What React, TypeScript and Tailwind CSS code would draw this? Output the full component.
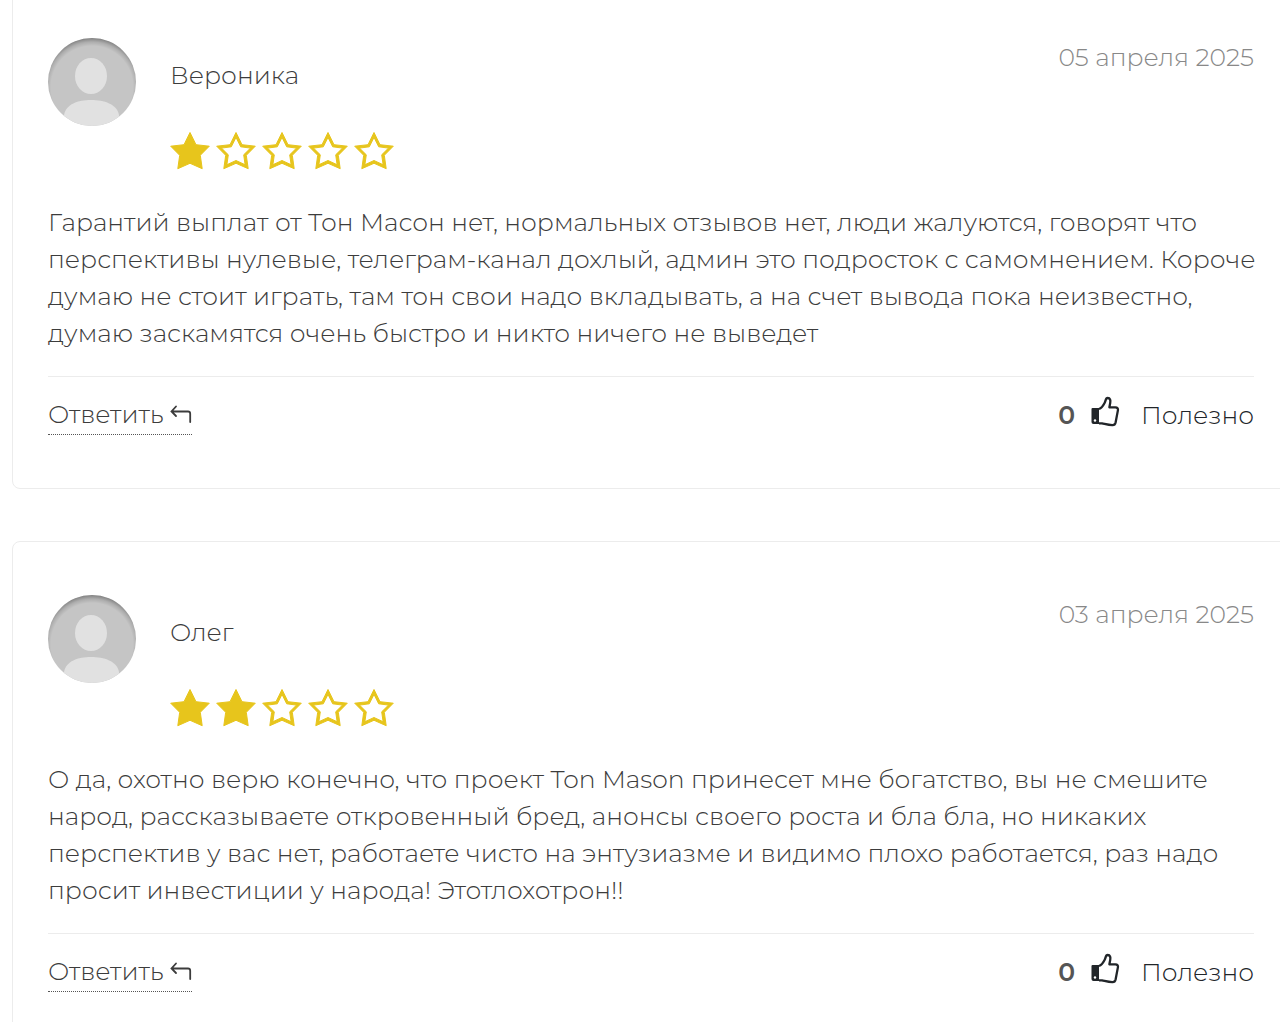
import clsx from "clsx";

interface Review {
  id: number;
  author: string;
  date: string;
  rating: number;
  text: string;
  likes: number;
}

const reviews: Review[] = [
  {
    id: 1,
    author: "Вероника",
    date: "05 апреля 2025",
    rating: 1,
    text: "Гарантий выплат от Тон Масон нет, нормальных отзывов нет, люди жалуются, говорят что перспективы нулевые, телеграм-канал дохлый, админ это подросток с самомнением. Короче думаю не стоит играть, там тон свои надо вкладывать, а на счет вывода пока неизвестно, думаю заскамятся очень быстро и никто ничего не выведет",
    likes: 0,
  },
  {
    id: 2,
    author: "Олег",
    date: "03 апреля 2025",
    rating: 2,
    text: "О да, охотно верю конечно, что проект Ton Mason принесет мне богатство, вы не смешите народ, рассказываете откровенный бред, анонсы своего роста и бла бла, но никаких перспектив у вас нет, работаете чисто на энтузиазме и видимо плохо работается, раз надо просит инвестиции у народа! Этотлохотрон!!",
    likes: 0,
  },
];

const STAR_OUTER = "M20 1.500L26 13.700 39.300 15.200 30.300 24.300 32.200 37.700 20 32.300 7.800 37.700 9.700 24.300.700 15.200 14 13.700z";
const STAR_INNER = "M20 6.400L15.300 15.800 5.500 17.100 12.300 23.800 10.900 33.700 20 29.500 29.100 33.700 27.700 23.800 34.500 17.100 24.700 15.800z";

function Avatar() {
  return (
    <div className="size-[88px] shrink-0 overflow-hidden rounded-full bg-[#c5c5c5]">
      <svg viewBox="0 0 88 88" className="size-full" aria-hidden="true">
        <defs>
          <radialGradient id="avatar-shade" cx="44" cy="49" r="50" gradientUnits="userSpaceOnUse">
            <stop offset="0.82" stopColor="#000" stopOpacity="0" />
            <stop offset="0.9" stopColor="#000" stopOpacity="0.12" />
            <stop offset="1" stopColor="#000" stopOpacity="0.4" />
          </radialGradient>
        </defs>
        <rect width="88" height="88" fill="url(#avatar-shade)" />
        <ellipse cx="43" cy="38" rx="16" ry="18" fill="#e1e1e1" />
        <path d="M16 77C18 66 30 62 43 62s26 4 28 15v11H16z" fill="#e1e1e1" />
      </svg>
    </div>
  );
}

function Star({ filled }: { filled: boolean }) {
  return (
    <svg viewBox="0 0 40 40" className="size-10 text-[#e7c51c]" aria-hidden="true">
      <path
        d={clsx(STAR_OUTER, !filled && STAR_INNER)}
        fill="currentColor"
        fillRule="evenodd"
        stroke="currentColor"
        strokeWidth="1"
        strokeLinejoin="round"
      />
    </svg>
  );
}

function ReplyIcon() {
  return (
    <svg viewBox="0 0 22 18" className="h-[18px] w-[22px]" fill="none" stroke="currentColor" aria-hidden="true">
      <path d="M6 1.500L1.500 6.500 6 11M1.500 6.500H18q2.200 0 2.200 2.200V17" strokeWidth="1.8" strokeLinecap="round" />
    </svg>
  );
}

function ThumbIcon() {
  return (
    <svg viewBox="0 0 30 32" className="mb-[6px] h-8 w-[30px]" aria-hidden="true">
      <path
        d="M8 13C11 12 12.500 9 13.800 6.500 14.800 4.500 14.500 2 16.700 2c2.500 0 3 2.300 2.500 5l-.8 4.300 6 .1c2 0 2.900 1.300 2.500 3l-2.300 12.100c-.4 1.800-1.400 2.700-3.300 2.600-4-.1-7.300-1.200-10.300-1.800H8"
        fill="none"
        stroke="currentColor"
        strokeWidth="2.3"
        strokeLinejoin="round"
      />
      <path d="M1.500 12H8v16H2.500Q.500 28 .500 26V13q0-1 1-1z" fill="currentColor" />
      <circle cx="4" cy="24.500" r="1.200" fill="#fff" />
    </svg>
  );
}

function ReviewCard({ review }: { review: Review }) {
  return (
    <article className="rounded-lg border border-[#ececec] px-[35px] pt-[53px] pb-[53px]">
      <header className="flex items-start">
        <Avatar />
        <div className="ml-[34px]">
          <h3 className="pt-[19px] leading-9">{review.author}</h3>
          <div
            className="mt-[38px] flex gap-[6px]"
            role="img"
            aria-label={`${review.rating} / 5`}
          >
            {[1, 2, 3, 4, 5].map((value) => (
              <Star key={value} filled={value <= review.rating} />
            ))}
          </div>
        </div>
        <time className="ml-auto pt-px leading-9 text-[#888]">{review.date}</time>
      </header>

      <p className="-mr-2 mt-[33px] leading-[37px]">{review.text}</p>

      <footer className="mt-6 flex items-start justify-between border-t border-[#ececec] pt-[19px]">
        <button
          type="button"
          className="flex items-center gap-[6px] border-b border-dotted border-[#555] pb-[2px] leading-9"
        >
          Ответить
          <ReplyIcon />
        </button>
        <div className="flex items-center leading-[38px]">
          <span className="font-semibold text-[#555]">{review.likes}</span>
          <button type="button" className="ml-4 flex items-center gap-5 text-[#212529]">
            <ThumbIcon />
            Полезно
          </button>
        </div>
      </footer>
    </article>
  );
}

export default function App() {
  return (
    <div className="h-screen overflow-hidden bg-white">
      <main className="-mt-4 -mr-[10px] flex flex-col gap-[52px] pl-3 font-['Montserrat','Inter',sans-serif] text-[25px] font-light text-[#3c3c3c]">
        {reviews.map((review) => (
          <ReviewCard key={review.id} review={review} />
        ))}
      </main>
    </div>
  );
}
